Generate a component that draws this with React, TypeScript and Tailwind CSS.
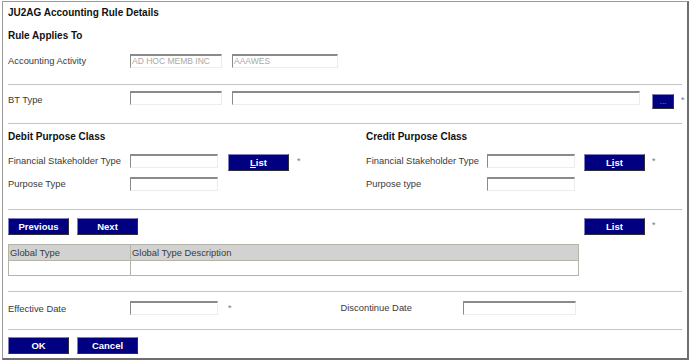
import React from "react";

const font = "font-['Liberation_Sans',Arial,sans-serif]";

function Field({ w = "w-[88px]", value }: { w?: string; value?: string }) {
  return (
    <div
      className={`${w} h-[14px] shrink-0 overflow-hidden whitespace-nowrap border-t-2 border-l border-t-[#8a8a8a] border-l-[#8a8a8a] border-r border-b border-r-[#ececec] border-b-[#ececec] bg-white flex items-center pl-[1px] text-[8.5px] leading-none text-[#a8a8a8]`}
    >
      {value}
    </div>
  );
}

function NavButton({
  children,
  w = "w-[61px]",
}: {
  children: React.ReactNode;
  w?: string;
}) {
  return (
    <button
      type="button"
      className={`${w} h-[17px] shrink-0 bg-[#000080] border border-t-[#8080c0] border-l-[#8080c0] border-r-[#303030] border-b-[#303030] text-white text-[9.5px] font-bold leading-none flex items-center justify-center`}
    >
      {children}
    </button>
  );
}

function Star() {
  return <span className="text-[9px] text-[#777] leading-none">*</span>;
}

export default function App() {
  return (
    <div className={`w-[692px] h-[364px] bg-white ${font} text-[9.4px] text-[#3a3a3a] whitespace-nowrap`}>
      <div className="ml-[2px] mt-[1px] w-[687px] h-[359px] border-l border-t border-l-[#9a9a9a] border-t-[#9a9a9a] border-r-2 border-b-2 border-r-[#6e6e6e] border-b-[#6e6e6e] px-[5px]">
        {/* Rule applies to */}
        <div className="border-b border-[#c4c4c4] pb-[9px]">
          <div className="h-[21px] flex items-center font-bold text-[10px] text-[#111]">
            JU2AG Accounting Rule Details
          </div>
          <div className="h-[24px] flex items-center font-bold text-[10px] text-[#111]">
            Rule Applies To
          </div>
          <div className="h-[28px] flex items-center">
            <div className="w-[122px] shrink-0">Accounting Activity</div>
            <Field w="w-[92px]" value="AD HOC MEMB INC" />
            <div className="w-[10px] shrink-0" />
            <Field w="w-[106px]" value="AAAWES" />
          </div>
        </div>

        {/* BT Type */}
        <div className="h-[39px] border-b border-[#c4c4c4] flex items-start pt-[6px]">
          <div className="w-[122px] shrink-0 pt-[2px]">BT Type</div>
          <Field w="w-[92px]" />
          <div className="w-[10px] shrink-0" />
          <Field w="w-[408px]" />
          <div className="w-[12px] shrink-0" />
          <button
            type="button"
            className="mt-[3px] w-[22px] h-[15px] shrink-0 bg-[#000080] border border-t-[#8080c0] border-l-[#8080c0] border-r-[#303030] border-b-[#303030] text-[#aab] text-[8px] leading-none flex items-center justify-center"
          >
            ...
          </button>
          <div className="w-0 overflow-visible pl-[7px] mt-[2px]">
            <Star />
          </div>
        </div>

        {/* Purpose classes */}
        <div className="h-[86px] border-b border-[#c4c4c4] flex">
          <div className="w-[358px] shrink-0">
            <div className="h-[24px] flex items-center font-bold text-[10px] text-[#111]">
              Debit Purpose Class
            </div>
            <div className="h-[20px] mt-[3px] flex items-center">
              <div className="w-[122px] shrink-0">Financial Stakeholder Type</div>
              <Field />
              <div className="w-[10px] shrink-0" />
              <div className="mt-[3px]">
                <NavButton>
                  <span className="underline">L</span>ist
                </NavButton>
              </div>
              <div className="ml-[8px]">
                <Star />
              </div>
            </div>
            <div className="h-[20px] mt-[3px] flex items-center">
              <div className="w-[122px] shrink-0">Purpose Type</div>
              <Field />
            </div>
          </div>
          <div className="flex-1">
            <div className="h-[24px] flex items-center font-bold text-[10px] text-[#111]">
              Credit Purpose Class
            </div>
            <div className="h-[20px] mt-[3px] flex items-center">
              <div className="w-[121px] shrink-0">Financial Stakeholder Type</div>
              <Field />
              <div className="w-[9px] shrink-0" />
              <div className="mt-[3px]">
                <NavButton>
                  L<span className="underline">i</span>st
                </NavButton>
              </div>
              <div className="ml-[7px]">
                <Star />
              </div>
            </div>
            <div className="h-[20px] mt-[3px] flex items-center">
              <div className="w-[121px] shrink-0">Purpose type</div>
              <Field />
            </div>
          </div>
        </div>

        {/* Global types */}
        <div className="h-[82px] border-b border-[#c4c4c4] pt-[8px]">
          <div className="flex items-start">
            <NavButton>Previous</NavButton>
            <div className="w-[8px] shrink-0" />
            <NavButton>Next</NavButton>
            <div className="w-[446px] shrink-0" />
            <NavButton>List</NavButton>
            <div className="ml-[7px]">
              <Star />
            </div>
          </div>
          <table className="mt-[9px] w-[571px] border-collapse border border-[#b4b4a8] text-[9.4px]">
            <tbody>
              <tr className="bg-[#d2d2d2] h-[16px]">
                <td className="w-[122px] border-r border-[#b4b4a8] px-[1px] py-0 leading-none">
                  Global Type
                </td>
                <td className="px-[1px] py-0 leading-none">Global Type Description</td>
              </tr>
              <tr className="h-[15px] bg-white">
                <td className="border-r border-t border-[#b4b4a8]" />
                <td className="border-t border-[#b4b4a8]" />
              </tr>
            </tbody>
          </table>
        </div>

        {/* Dates */}
        <div className="h-[38px] border-b border-[#c4c4c4] pt-[9px] flex items-start">
          <div className="w-[122px] shrink-0 pt-[1px]">Effective Date</div>
          <Field />
          <div className="ml-[10px]">
            <Star />
          </div>
          <div className="w-[109px] shrink-0" />
          <div className="w-[122px] shrink-0">Discontinue Date</div>
          <Field w="w-[113px]" />
        </div>

        {/* Actions */}
        <div className="pt-[7px] flex">
          <NavButton>OK</NavButton>
          <div className="w-[8px] shrink-0" />
          <NavButton>Cancel</NavButton>
        </div>
      </div>
    </div>
  );
}
